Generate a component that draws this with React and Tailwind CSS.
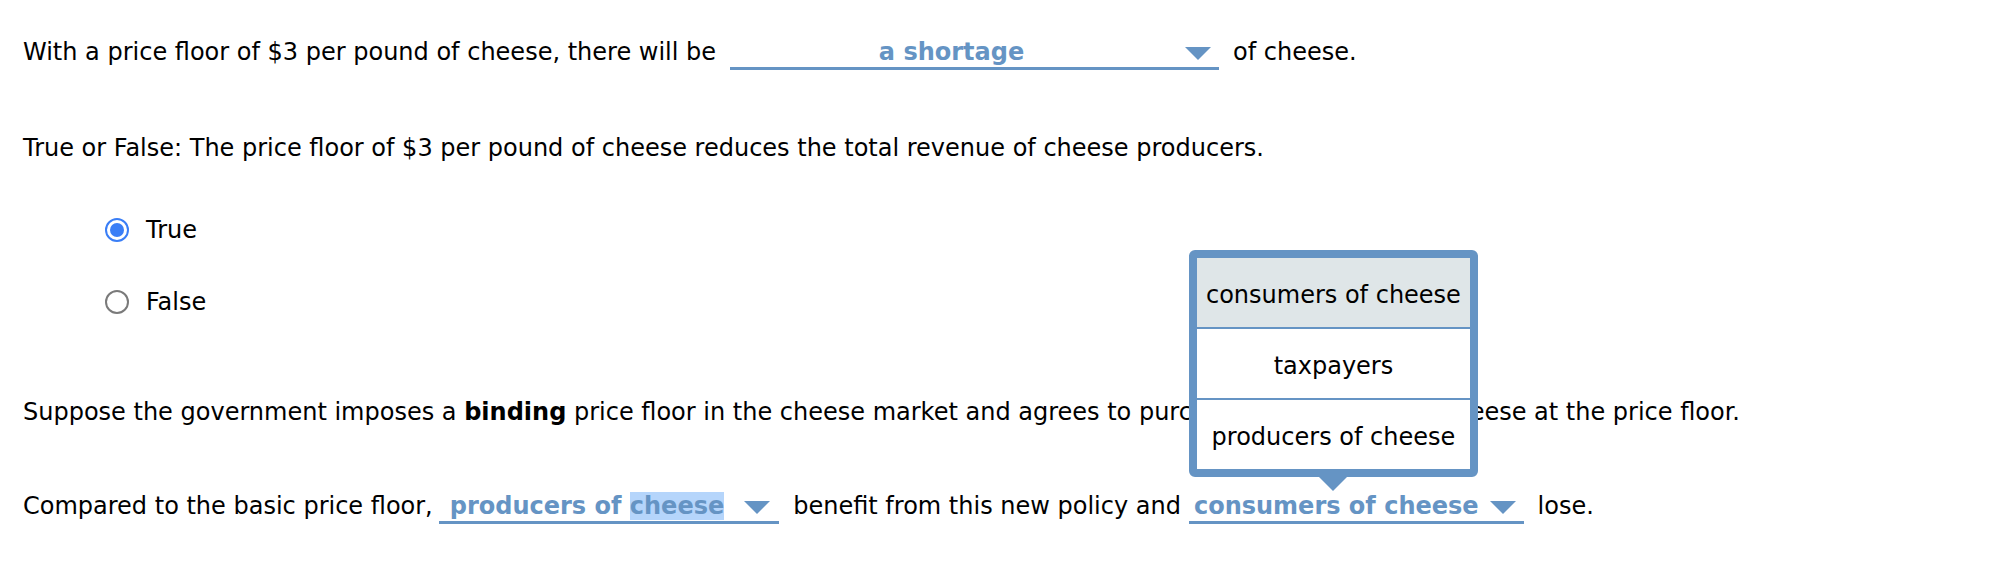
import React from 'react';

const BLUE = '#6594c4';

function Caret({ className = '' }) {
  return (
    <svg className={`h-[13px] w-[26px] shrink-0 ${className}`} viewBox="0 0 26 13">
      <polygon points="0,0 26,0 13,13" fill={BLUE} />
    </svg>
  );
}

function Dropdown({ children, className = '', textClass = '', caretClass = '', popup = null }) {
  return (
    <span className={`relative inline-flex items-baseline border-b-[3px] border-[#6594c4] font-bold text-[#6594c4] whitespace-pre ${className}`}>
      <span className={textClass}>{children}</span>
      <Caret className={caretClass} />
      {popup}
    </span>
  );
}

function Radio({ checked, label, className = '' }) {
  return (
    <div className={`flex h-[30px] items-center pl-[82px] ${className}`}>
      {checked ? (
        <span className="flex h-[24px] w-[24px] items-center justify-center rounded-full border-2 border-[#3a7ef6] bg-white">
          <span className="h-[14px] w-[14px] rounded-full bg-[#3a7ef6]" />
        </span>
      ) : (
        <span className="h-[24px] w-[24px] rounded-full border-2 border-[#7a7a7a] bg-white" />
      )}
      <span className="ml-[17px]">{label}</span>
    </div>
  );
}

function OptionsPopup() {
  const options = ['consumers of cheese', 'taxpayers', 'producers of cheese'];
  return (
    <div className="absolute bottom-full left-0 mb-[1px] flex flex-col items-center font-normal text-black">
      <div className="w-[289px] overflow-hidden rounded-[6px] border-8 border-[#6594c4] bg-white">
        {options.map((opt, i) => (
          <div
            key={opt}
            className={`flex items-center justify-center pt-[6px] ${i === 0 ? 'h-[69px] bg-[#dfe6e8]' : 'h-[71px] border-t-2 border-[#6594c4]'}`}
          >
            {opt}
          </div>
        ))}
      </div>
      <svg className="h-[14px] w-[28px]" viewBox="0 0 28 14">
        <polygon points="0,0 28,0 14,14" fill={BLUE} />
      </svg>
    </div>
  );
}

export default function App() {
  return (
    <div className="min-h-[562px] bg-white pl-[23px] pt-[38px] font-['DejaVu_Sans',sans-serif] text-[24px] leading-[29px] text-black">
      <div className="flex items-baseline whitespace-pre">
        <span>With a price floor of $3 per pound of cheese, there will be</span>
        <Dropdown className="ml-[14px] w-[489px]" textClass="flex-1 pr-[12px] text-center" caretClass="mr-[8px]">
          a shortage
        </Dropdown>
        <span className="ml-[14px]">of cheese.</span>
      </div>

      <div className="mt-[64px] whitespace-pre">
        True or False: The price floor of $3 per pound of cheese reduces the total revenue of cheese producers.
      </div>

      <Radio checked label="True" className="mt-[52px]" />
      <Radio checked={false} label="False" className="mt-[42px]" />

      <div className="mt-[81px] whitespace-pre">
        Suppose the government imposes a <b>binding</b> price floor in the cheese market and agrees to purchase all the <span className="mr-[7px]">surplus</span> cheese at the price floor.
      </div>

      <div className="mt-[65px] flex items-baseline whitespace-pre">
        <span>Compared to the basic price floor,</span>
        <Dropdown className="ml-[6px]" textClass="pl-[11px]" caretClass="ml-[20px] mr-[9px]">
          producers of <span className="bg-[#b5d5fb]">cheese</span>
        </Dropdown>
        <span className="ml-[14px]">benefit from this new policy and</span>
        <Dropdown className="ml-[8px]" textClass="pl-[5px]" caretClass="ml-[11px] mr-[8px]" popup={<OptionsPopup />}>
          consumers of cheese
        </Dropdown>
        <span className="ml-[14px]">lose.</span>
      </div>
    </div>
  );
}
